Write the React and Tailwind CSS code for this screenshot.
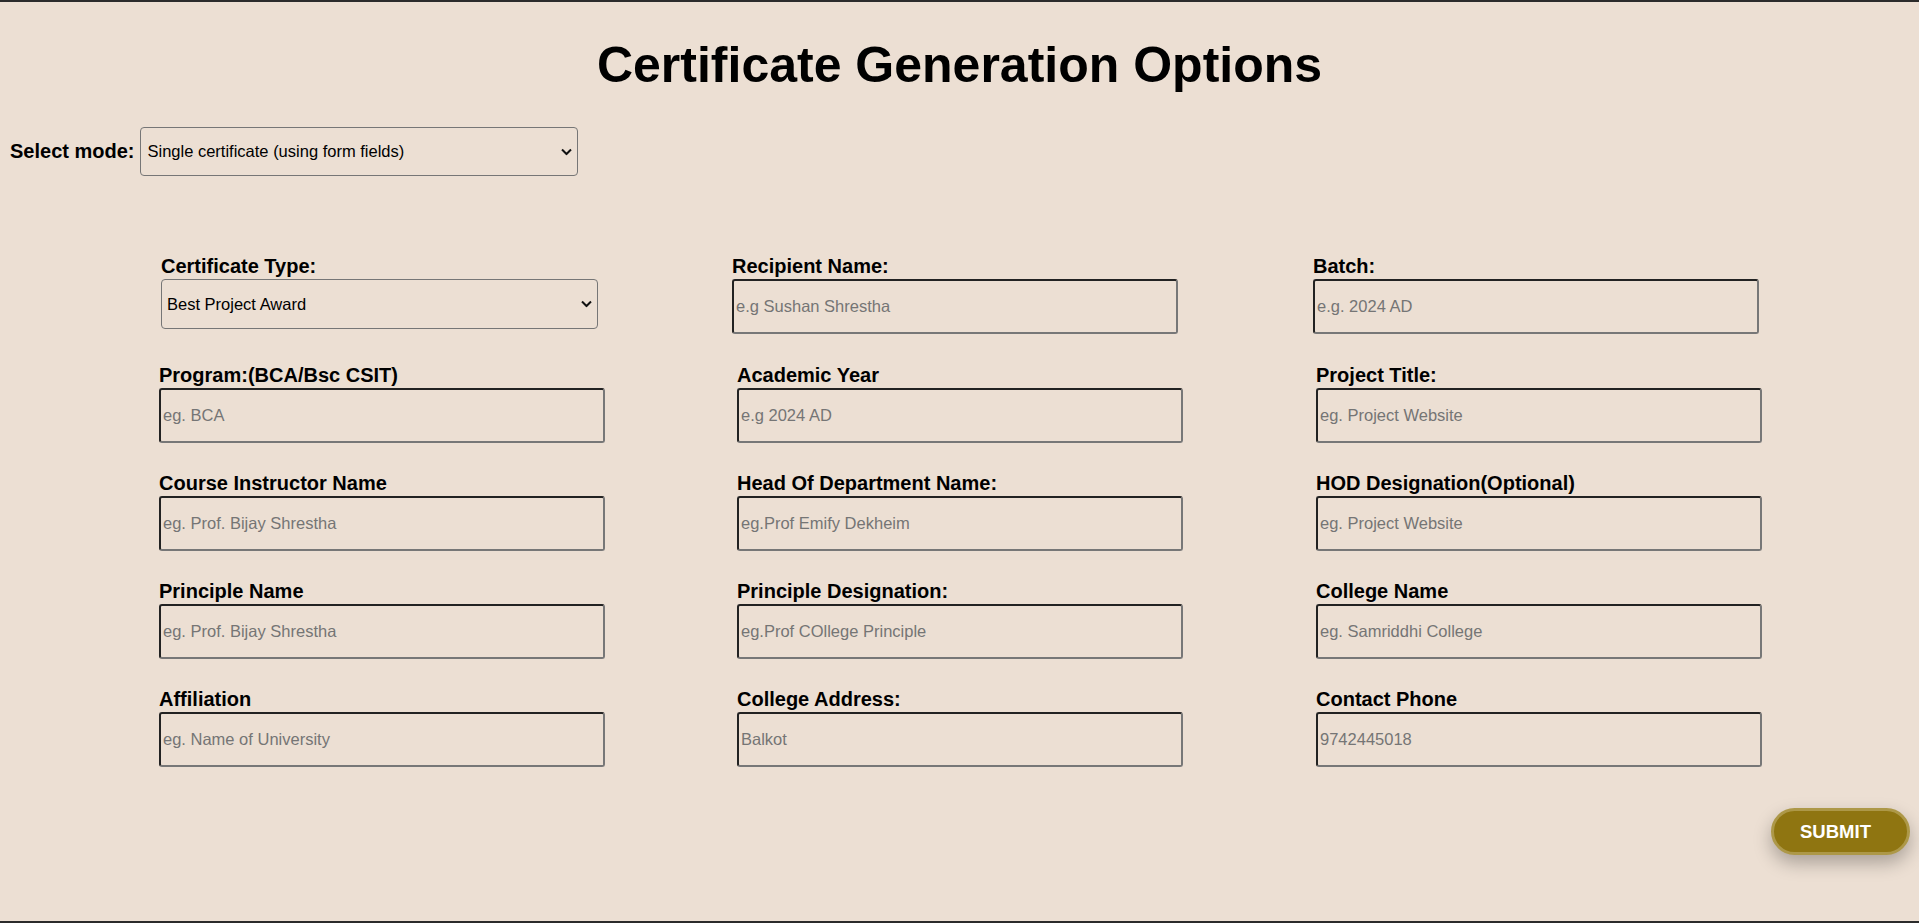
import { useState } from 'react'

const rows = [
  [
    { label: 'Program:(BCA/Bsc CSIT)', ph: 'eg. BCA' },
    { label: 'Academic Year', ph: 'e.g 2024 AD' },
    { label: 'Project Title:', ph: 'eg. Project Website' },
  ],
  [
    { label: 'Course Instructor Name', ph: 'eg. Prof. Bijay Shrestha' },
    { label: 'Head Of Department Name:', ph: 'eg.Prof Emify Dekheim' },
    { label: 'HOD Designation(Optional)', ph: 'eg. Project Website' },
  ],
  [
    { label: 'Principle Name', ph: 'eg. Prof. Bijay Shrestha' },
    { label: 'Principle Designation:', ph: 'eg.Prof COllege Principle' },
    { label: 'College Name', ph: 'eg. Samriddhi College' },
  ],
  [
    { label: 'Affiliation', ph: 'eg. Name of University' },
    { label: 'College Address:', ph: 'Balkot' },
    { label: 'Contact Phone', ph: '9742445018' },
  ],
]

const inputCls =
  'block mt-px w-[446px] h-[55px] border-2 border-t-[#222] border-l-[#222] border-r-[#777] border-b-[#777] rounded-[3px] px-[2px] bg-transparent text-[16.5px] text-black placeholder:text-[#757575] outline-none'

function Chevron() {
  return (
    <svg
      className="pointer-events-none absolute right-[6px] top-1/2 -translate-y-1/2"
      width="11"
      height="7"
      viewBox="0 0 11 7"
      fill="none"
    >
      <path d="M1 1l4.5 4.5L10 1" stroke="#111" strokeWidth="2" />
    </svg>
  )
}

function Field({ label, ph }) {
  return (
    <div>
      <label className="block text-[20px] font-bold leading-[23px]">{label}</label>
      <input type="text" placeholder={ph} className={inputCls} />
    </div>
  )
}

export default function App() {
  const [mode, setMode] = useState('single')
  const [type, setType] = useState('best')

  return (
    <div className="h-screen overflow-hidden border-y-2 border-[#2b2b2b] bg-[#ecdfd3] font-['Liberation_Sans',Arial,sans-serif] text-black">
      <h1 className="pt-[35px] text-center text-[50px] font-bold leading-[56px]">
        Certificate Generation Options
      </h1>

      <div className="mt-[34px] flex items-center pl-[10px]">
        <label className="text-[20px] font-bold leading-[23px]">Select mode:</label>
        <div className="relative ml-[6px] h-[49px] w-[438px]">
          <select
            value={mode}
            onChange={e => setMode(e.target.value)}
            className="h-full w-full appearance-none rounded-[4px] border border-[#767676] bg-transparent pl-[6px] text-[16.5px] outline-none"
          >
            <option value="single">Single certificate (using form fields)</option>
            <option value="bulk">Bulk certificates (using CSV file)</option>
          </select>
          <Chevron />
        </div>
      </div>

      <div className="mt-[79px] grid grid-cols-[571px_581px_446px] items-start pl-[161px]">
        <div>
          <label className="block text-[20px] font-bold leading-[23px]">Certificate Type:</label>
          <div className="relative mt-px h-[50px] w-[437px]">
            <select
              value={type}
              onChange={e => setType(e.target.value)}
              className="h-full w-full appearance-none rounded-[4px] border border-[#767676] bg-transparent pl-[5px] text-[16.5px] outline-none"
            >
              <option value="best">Best Project Award</option>
              <option value="participation">Participation</option>
            </select>
            <Chevron />
          </div>
        </div>
        <Field label="Recipient Name:" ph="e.g Sushan Shrestha" />
        <Field label="Batch:" ph="e.g. 2024 AD" />
      </div>

      <div className="mt-[30px] grid grid-cols-[578px_579px_446px] gap-y-[29px] pl-[159px]">
        {rows.flat().map((f, i) => (
          <Field key={i} label={f.label} ph={f.ph} />
        ))}
      </div>

      <div className="mt-[41px] flex justify-end pr-[9px]">
        <button className="h-[47px] w-[139px] rounded-full border-[3px] border-[#ad9848] bg-[#8f7511] pr-[10px] text-[18.5px] font-bold text-white shadow-[0_8px_18px_rgba(0,0,0,0.28)]">
          SUBMIT
        </button>
      </div>
    </div>
  )
}
